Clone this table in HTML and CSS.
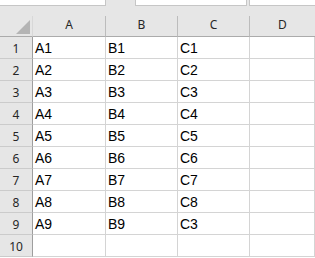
FILE: index.html
```html
<!DOCTYPE html>
<html>
<head>
    <title>Sheet1</title>
    <link rel="stylesheet" href="styles.css">
</head>
<body>
    <div class="toolbar">
        <div class="box name-box"></div>
        <div class="box formula-box"></div>
        <div class="box extra-box"></div>
    </div>

    <div class="sheet">
        <div class="corner"><span class="corner-mark"></span></div>
        <div class="col-head">A</div>
        <div class="col-head">B</div>
        <div class="col-head">C</div>
        <div class="col-head last">D</div>

        <div class="row-head">1</div><div class="cell">A1</div><div class="cell">B1</div><div class="cell">C1</div><div class="cell"></div>
        <div class="row-head">2</div><div class="cell">A2</div><div class="cell">B2</div><div class="cell">C2</div><div class="cell"></div>
        <div class="row-head">3</div><div class="cell">A3</div><div class="cell">B3</div><div class="cell">C3</div><div class="cell"></div>
        <div class="row-head">4</div><div class="cell">A4</div><div class="cell">B4</div><div class="cell">C4</div><div class="cell"></div>
        <div class="row-head">5</div><div class="cell">A5</div><div class="cell">B5</div><div class="cell">C5</div><div class="cell"></div>
        <div class="row-head">6</div><div class="cell">A6</div><div class="cell">B6</div><div class="cell">C6</div><div class="cell"></div>
        <div class="row-head">7</div><div class="cell">A7</div><div class="cell">B7</div><div class="cell">C7</div><div class="cell"></div>
        <div class="row-head">8</div><div class="cell">A8</div><div class="cell">B8</div><div class="cell">C8</div><div class="cell"></div>
        <div class="row-head">9</div><div class="cell">A9</div><div class="cell">B9</div><div class="cell">C3</div><div class="cell"></div>
        <div class="row-head">10</div><div class="cell"></div><div class="cell"></div><div class="cell"></div><div class="cell"></div>
    </div>
</body>
</html>
```

FILE: styles.css
```css
body {
    margin: 0;
    background-color: #fff;
    font-family: 'Liberation Sans', Arial, sans-serif;
    overflow: hidden;
}

/* strip of input boxes above the grid */
.toolbar {
    display: flex;
    height: 6px;
    background-color: #e6e6e6;
    margin-bottom: 10px;
}

.box {
    box-sizing: border-box;
    height: 6px;
    background-color: #fff;
    border: 1px solid #c6c6c6;
    border-top: none;
}

.name-box {
    width: 106px;
    border-left: none;
    margin-right: 29px;
}

.formula-box {
    width: 112px;
    margin-right: 2px;
}

.extra-box {
    flex: 1;
    border-right: none;
}

.sheet {
    display: grid;
    grid-template-columns: 33px 73px 72px 72px 1fr;
    grid-auto-rows: 22px;
    grid-template-rows: 21px;
    box-shadow: 0 -10px 0 #e6e6e6;
}

.corner,
.col-head,
.row-head {
    box-sizing: border-box;
    background-color: #e6e6e6;
    color: #262626;
    font-family: 'Noto Sans', sans-serif;
    font-size: 12px;
    line-height: 15px;
    display: flex;
    align-items: flex-end;
    justify-content: center;
}

.corner {
    border-bottom: 1px solid #ababab;
    border-right: 1px solid #d8d8d8;
    justify-content: flex-end;
    padding: 0 2px 2px 0;
}

.corner-mark {
    width: 14px;
    height: 14px;
    background-color: #b4b4b4;
    clip-path: polygon(100% 0, 100% 100%, 0 100%);
}

.col-head {
    border-bottom: 1px solid #ababab;
    border-right: 1px solid #bcbcbc;
    padding-bottom: 4px;
}

.col-head.last {
    border-right: none;
}

.row-head {
    border-right: 1px solid #9e9e9e;
    border-bottom: 1px solid #cbcbcb;
    padding-bottom: 2px;
}

.cell {
    box-sizing: border-box;
    border-right: 1px solid #d4d4d4;
    border-bottom: 1px solid #d4d4d4;
    color: #000;
    font-size: 14px;
    line-height: 15px;
    padding: 0 2px 2px 2px;
    display: flex;
    align-items: flex-end;
}
```
